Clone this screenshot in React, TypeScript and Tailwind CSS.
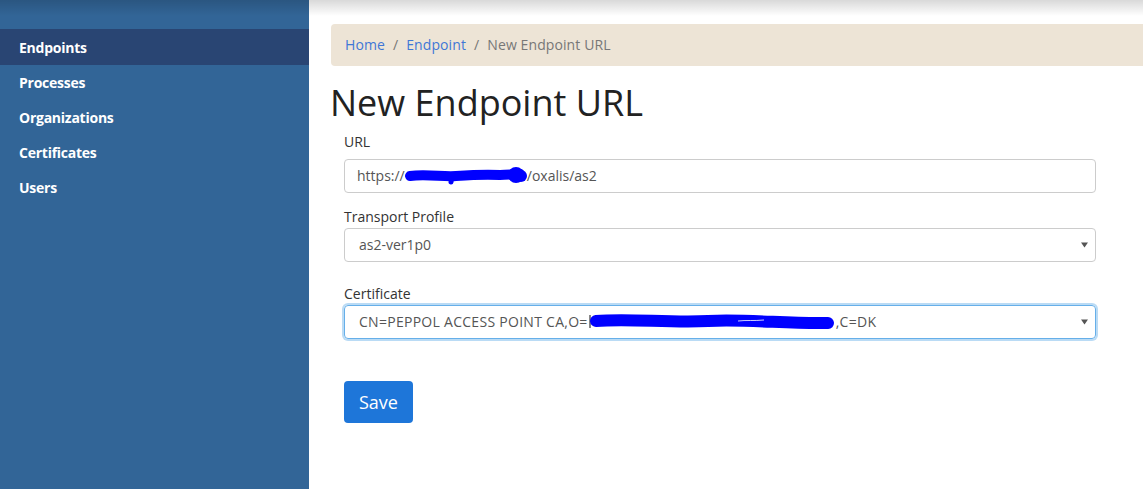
import React from "react";

function Caret() {
  return (
    <svg width="7" height="6" viewBox="0 0 7 6" className="shrink-0">
      <path d="M0 0.5 L7 0.5 L3.5 5.5 Z" fill="#555" />
    </svg>
  );
}

function UrlScribble() {
  return (
    <svg width="124" height="20" viewBox="0 0 124 20" className="shrink-0 -mx-[1px]">
      <path
        d="M6 10 C 22 8, 40 11, 52 10 C 66 9, 80 8, 96 9 C 104 9, 110 8, 116 8"
        stroke="#0000ff"
        strokeWidth="10"
        strokeLinecap="round"
        fill="none"
      />
      <path d="M48 10 L47 16" stroke="#0000ff" strokeWidth="5" strokeLinecap="round" />
      <circle cx="112" cy="9" r="8" fill="#0000ff" />
      <circle cx="117" cy="10" r="6" fill="#0000ff" />
    </svg>
  );
}

function CertScribble() {
  return (
    <svg width="248" height="20" viewBox="0 0 248 20" className="shrink-0">
      <path d="M2 3 L2 16" stroke="#555" strokeWidth="1.4" />
      <path
        d="M8 9 C 40 6, 80 11, 120 9 C 160 7, 200 12, 240 11"
        stroke="#0000ff"
        strokeWidth="12"
        strokeLinecap="round"
        fill="none"
      />
      <path d="M150 9 C 158 8, 166 9, 176 8" stroke="#ffffff" strokeWidth="1" opacity="0.8" fill="none" />
    </svg>
  );
}

export default function App() {
  const items = ["Endpoints", "Processes", "Organizations", "Certificates", "Users"];
  return (
    <div
      className="relative flex h-[489px] w-[1143px] overflow-hidden bg-white"
      style={{ fontFamily: '"Open Sans", "Noto Sans", sans-serif' }}
    >
      <div className="w-[309px] shrink-0 bg-[#326597] pt-[29px]">
        {items.map((it, i) => (
          <div
            key={it}
            className={
              "pl-[19px] text-[14px] leading-[20px] font-bold text-white tracking-[-0.25px] " +
              (i === 0 ? "h-[36px] pt-[9px] bg-[#294573]" : "h-[35px] pt-[8px]")
            }
          >
            {it}
          </div>
        ))}
      </div>

      <div className="flex-1 pl-[22px] pt-[24px]">
        <div className="flex h-[42px] items-center rounded-l-[4px] bg-[#ede4d6] pl-[14px] text-[14px] leading-[20px] tracking-[0.1px]">
          <span className="text-[#3f77d6]">Home</span>
          <span className="px-[8px] text-[#777]">/</span>
          <span className="text-[#3f77d6]">Endpoint</span>
          <span className="px-[8px] text-[#777]">/</span>
          <span className="text-[#777]">New Endpoint URL</span>
        </div>

        <h1 className="-ml-[1px] mt-[17px] text-[36px] leading-[1.1] font-normal text-[#222]">
          New Endpoint URL
        </h1>

        <div className="ml-[13px] w-[752px] pt-[9px] text-[14px] leading-[20px] text-[#333]">
          <div className="mb-[7px]">URL</div>
          <div className="flex h-[34px] items-center rounded-[4px] border border-[#ccc] pl-[12px] text-[#555]">
            <span>https://</span>
            <UrlScribble />
            <span>/oxalis/as2</span>
          </div>

          <div className="mt-[14px] mb-[1px]">Transport Profile</div>
          <div className="flex h-[34px] items-center justify-between rounded-[4px] border border-[#ccc] pl-[14px] pr-[7px] text-[#555]">
            <span>as2-ver1p0</span>
            <Caret />
          </div>

          <div className="mt-[22px] mb-[1px]">Certificate</div>
          <div className="flex h-[34px] items-center justify-between rounded-[4px] border border-[#66afe9] pl-[14px] pr-[7px] text-[#555] shadow-[0_0_0_2px_rgba(102,175,233,0.45)]">
            <span className="flex items-center">
              <span className="tracking-[0.28px]">CN=PEPPOL ACCESS POINT CA,O=</span>
              <CertScribble />
              <span className="tracking-[0.28px]">,C=DK</span>
            </span>
            <Caret />
          </div>

          <button className="mt-[42px] flex h-[42px] w-[69px] items-center justify-center rounded-[4px] bg-[#1e76d9] text-[18px] text-white">
            Save
          </button>
        </div>
      </div>

      <div className="pointer-events-none absolute left-0 right-0 top-0 h-[16px] bg-gradient-to-b from-black/15 to-transparent" />
    </div>
  );
}
